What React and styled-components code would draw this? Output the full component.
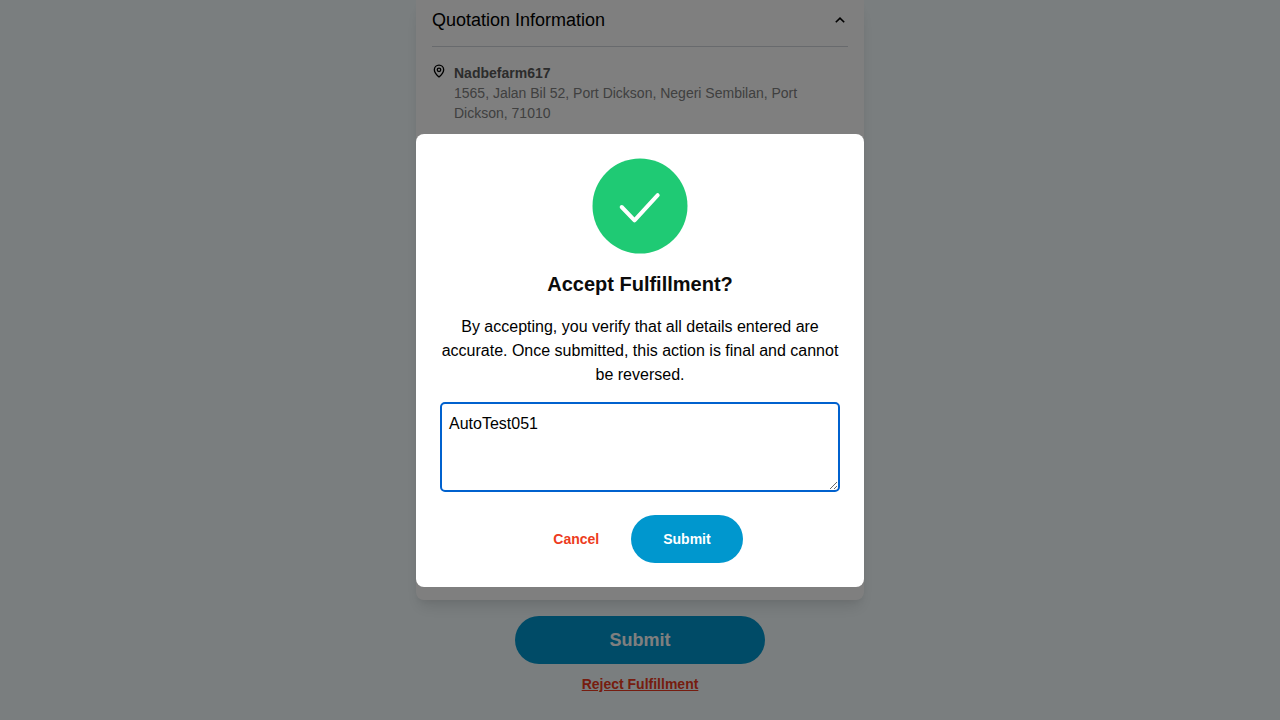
import React from "react";
import styled, { createGlobalStyle } from "styled-components";
import { MapPin } from "lucide-react";

const GlobalStyle = createGlobalStyle`
  *, *::before, *::after { box-sizing: border-box; }
  body {
    margin: 0;
    overflow: hidden;
    background: #f5fdff;
    color: #000;
    font-family: "Liberation Sans", Arial, sans-serif;
    font-size: 16px;
    line-height: 24px;
  }
  h2, h3, p { margin: 0; }
  button { font-family: inherit; border: 0; cursor: pointer; }
`;

const Page = styled.main`
  height: 720px;
  display: flex;
  flex-direction: column;
  align-items: center;
`;

const Card = styled.section`
  width: 448px;
  height: 600px;
  flex: none;
  padding: 0 16px;
  background: #fff;
  border-radius: 0 0 8px 8px;
  box-shadow: 0 10px 15px -3px rgba(0, 0, 0, 0.1), 0 4px 6px -2px rgba(0, 0, 0, 0.05);
`;

const CardHeader = styled.header`
  height: 47px;
  display: flex;
  justify-content: space-between;
  align-items: flex-start;
  padding-top: 6px;
  border-bottom: 1px solid #d1d5db;
`;

const CardTitle = styled.h2`
  font-size: 18px;
  font-weight: 400;
  line-height: 28px;
`;

const Chevron = styled.svg`
  width: 16px;
  height: 16px;
  margin-top: 6px;
`;

const Address = styled.div`
  display: flex;
  gap: 8px;
  padding-top: 16px;
  font-size: 14px;
  line-height: 20px;
`;

const Pin = styled(MapPin)`
  flex: none;
  margin-top: 1px;
  color: #000;
`;

const AddressText = styled.p`
  width: 360px;
  color: #808080;
`;

const AddressName = styled.strong`
  display: block;
  color: #585858;
`;

const PillButton = styled.button`
  width: ${({ $large }) => ($large ? "250px" : "111.5px")};
  height: 48px;
  padding: 0;
  flex: none;
  border-radius: 24px;
  background: #0097ce;
  color: #fff;
  font-size: ${({ $large }) => ($large ? "18px" : "14px")};
  font-weight: 700;
  line-height: 24px;
`;

const PageActions = styled.div`
  display: flex;
  flex-direction: column;
  align-items: center;
  gap: 10px;
  padding-top: 16px;
`;

const TextButton = styled.button`
  padding: 0;
  background: transparent;
  color: #ed3b20;
  font-size: 14px;
  font-weight: 700;
  line-height: 20px;
  text-decoration: ${({ $underlined }) => ($underlined ? "underline" : "none")};
`;

const Overlay = styled.div`
  position: fixed;
  inset: 0;
  display: flex;
  align-items: flex-start;
  justify-content: center;
  padding-top: 134px;
  background: rgba(0, 0, 0, 0.5);
`;

const Dialog = styled.div`
  width: 448px;
  height: 452.5px;
  padding: 24px;
  display: flex;
  flex-direction: column;
  align-items: center;
  background: #fff;
  border-radius: 8px;
`;

const SuccessIcon = styled.svg`
  width: 96px;
  height: 96px;
  flex: none;
`;

const DialogTitle = styled.h3`
  margin-top: 16px;
  font-size: 20px;
  line-height: 28px;
  color: #0b0b0b;
`;

const DialogText = styled.p`
  margin-top: 17px;
  text-align: center;
`;

const Note = styled.textarea`
  display: block;
  width: 400px;
  height: 90px;
  flex: none;
  margin: 15px 0 0;
  padding: 8px 7px;
  border: 2px solid #0061ce;
  border-radius: 5px;
  outline: none;
  background: #fff;
  color: #000;
  font: inherit;
  resize: vertical;
`;

const DialogActions = styled.div`
  display: flex;
  align-items: center;
  gap: 32px;
  margin-top: 22.5px;
  padding-left: 16px;
`;

export default function App() {
  return (
    <>
      <GlobalStyle />
      <Page>
        <Card>
          <CardHeader>
            <CardTitle>Quotation Information</CardTitle>
            <Chevron viewBox="0 0 16 16" fill="none" stroke="#000" strokeWidth="1.6">
              <path d="M3.8 10.3 8 6.1l4.2 4.2" />
            </Chevron>
          </CardHeader>
          <Address>
            <Pin size={14} strokeWidth={2.3} />
            <AddressText>
              <AddressName>Nadbefarm617</AddressName>
              1565, Jalan Bil 52, Port Dickson, Negeri Sembilan, Port Dickson, 71010
            </AddressText>
          </Address>
        </Card>
        <PageActions>
          <PillButton $large>Submit</PillButton>
          <TextButton $underlined>Reject Fulfillment</TextButton>
        </PageActions>
      </Page>
      <Overlay>
        <Dialog role="dialog" aria-modal="true">
          <SuccessIcon viewBox="0 0 96 96" fill="none">
            <circle cx="48" cy="48" r="47.5" fill="#1fca74" />
            <path d="M29.7 49 42.5 62.3 65.7 37.2" stroke="#fff" strokeWidth="4" strokeLinecap="round" strokeLinejoin="round" />
          </SuccessIcon>
          <DialogTitle>Accept Fulfillment?</DialogTitle>
          <DialogText>
            By accepting, you verify that all details entered are accurate. Once submitted, this action is final and cannot be reversed.
          </DialogText>
          <Note defaultValue="AutoTest051" />
          <DialogActions>
            <TextButton>Cancel</TextButton>
            <PillButton>Submit</PillButton>
          </DialogActions>
        </Dialog>
      </Overlay>
    </>
  );
}
